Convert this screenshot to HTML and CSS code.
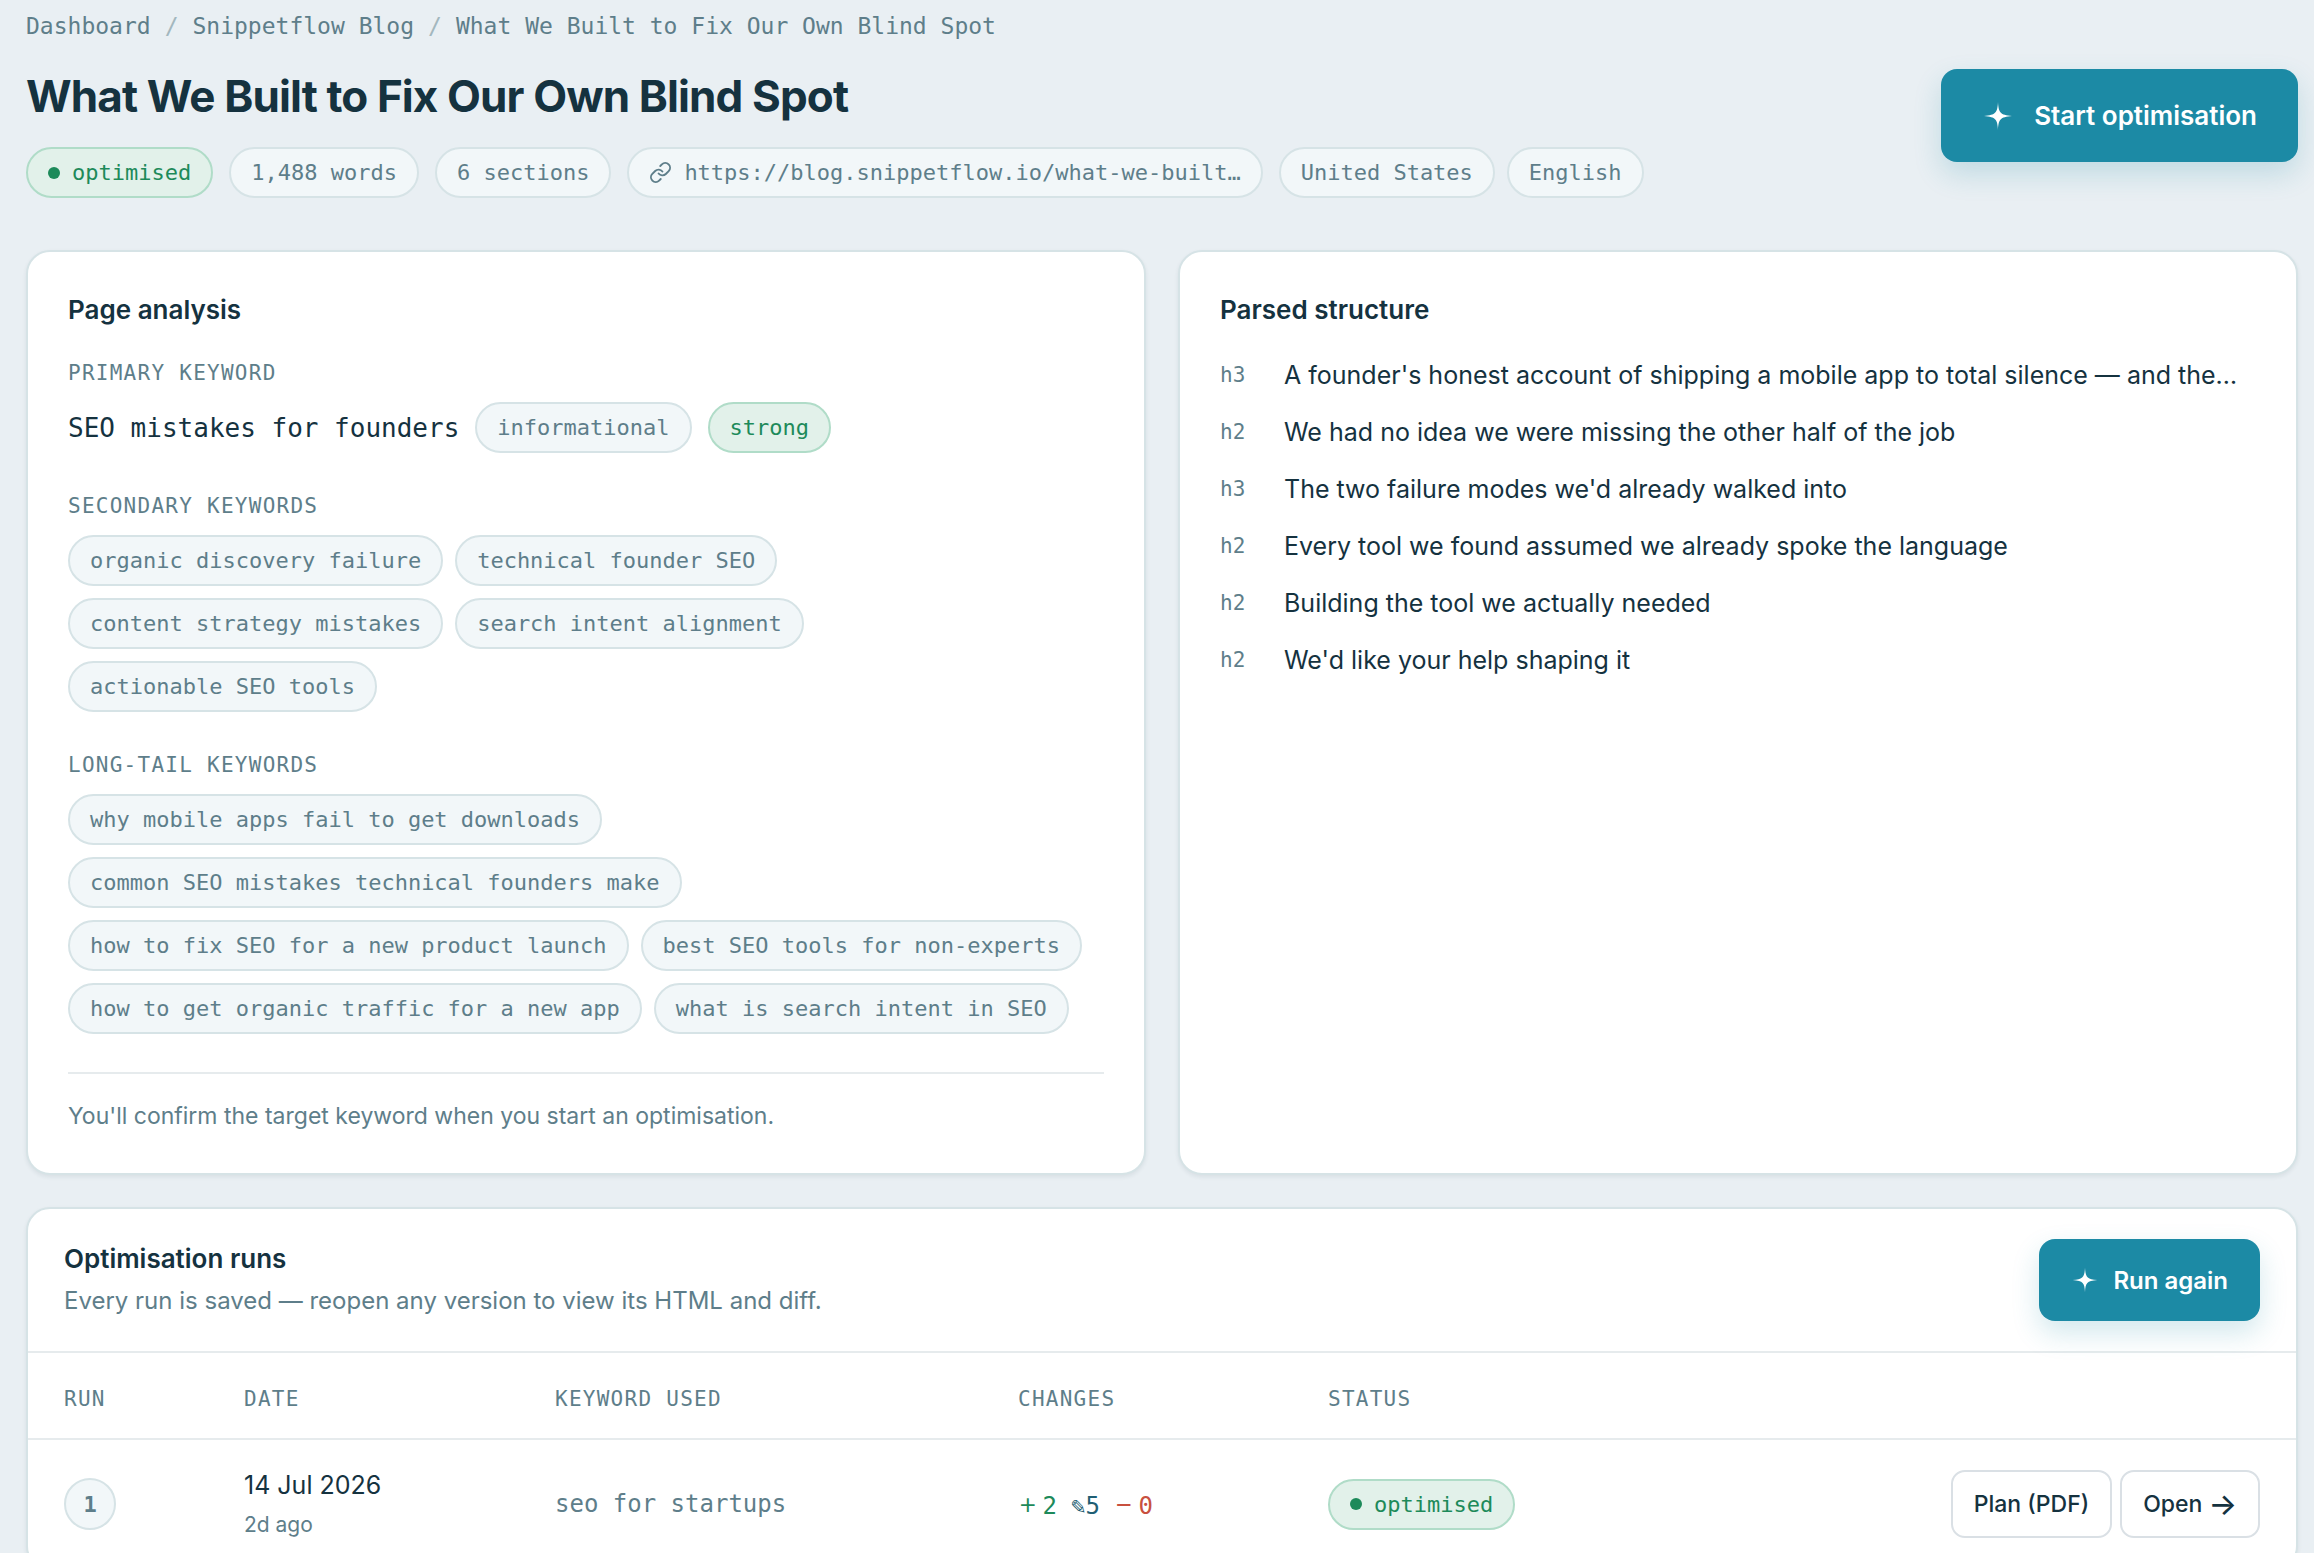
FILE: index.html
```html
<!DOCTYPE html>
<html lang="en">
<head>
  <meta charset="utf-8">
  <title>What We Built to Fix Our Own Blind Spot</title>
  <link rel="stylesheet" href="styles.css">
</head>
<body>
  <main class="page">
    <nav class="breadcrumb" aria-label="Breadcrumb">
      <a href="#">Dashboard</a>
      <span class="sep">/</span>
      <a href="#">Snippetflow Blog</a>
      <span class="sep">/</span>
      <span>What We Built to Fix Our Own Blind Spot</span>
    </nav>

    <header class="page-head">
      <div>
        <h1>What We Built to Fix Our Own Blind Spot</h1>
        <div class="meta">
          <span class="pill pill-green"><i class="dot"></i>optimised</span>
          <span class="pill">1,488 words</span>
          <span class="pill">6 sections</span>
          <a class="pill pill-link" href="#">
            <svg viewBox="0 0 24 24" fill="none" stroke="currentColor" stroke-width="2" stroke-linecap="round" stroke-linejoin="round">
              <path d="M10 13a5 5 0 0 0 7.54.54l3-3a5 5 0 0 0-7.07-7.07l-1.72 1.71"/>
              <path d="M14 11a5 5 0 0 0-7.54-.54l-3 3a5 5 0 0 0 7.07 7.07l1.71-1.71"/>
            </svg>
            https://blog.snippetflow.io/what-we-built…
          </a>
          <div class="locale">
            <span class="pill">United States</span>
            <span class="pill">English</span>
          </div>
        </div>
      </div>
      <button type="button" class="btn-primary btn-large">
        <svg viewBox="0 0 32 32" fill="currentColor">
          <path d="M16 2c.6 10.500 2 13 14 14-12 1-13.400 3.500-14 14-.6-10.500-2-13-14-14 12-1 13.400-3.500 14-14z"/>
        </svg>
        Start optimisation
      </button>
    </header>

    <div class="grid">
      <section class="card card-pad">
        <h2>Page analysis</h2>

        <div class="group">
          <h3 class="label">Primary keyword</h3>
          <div class="primary">
            <strong>SEO mistakes for founders</strong>
            <span class="pill">informational</span>
            <span class="pill pill-green">strong</span>
          </div>
        </div>

        <div class="group">
          <h3 class="label">Secondary keywords</h3>
          <div class="pills">
            <span class="pill">organic discovery failure</span>
            <span class="pill">technical founder SEO</span>
            <span class="pill">content strategy mistakes</span>
            <span class="pill">search intent alignment</span>
            <span class="pill">actionable SEO tools</span>
          </div>
        </div>

        <div class="group">
          <h3 class="label">Long-tail keywords</h3>
          <div class="pills">
            <span class="pill">why mobile apps fail to get downloads</span>
            <span class="pill">common SEO mistakes technical founders make</span>
            <span class="pill">how to fix SEO for a new product launch</span>
            <span class="pill">best SEO tools for non-experts</span>
            <span class="pill">how to get organic traffic for a new app</span>
            <span class="pill">what is search intent in SEO</span>
          </div>
        </div>

        <p class="note">You'll confirm the target keyword when you start an optimisation.</p>
      </section>

      <section class="card card-pad">
        <h2>Parsed structure</h2>
        <ul class="outline">
          <li><span class="tag">h3</span><span class="heading">A founder's honest account of shipping a mobile app to total silence — and the…</span></li>
          <li><span class="tag">h2</span><span class="heading">We had no idea we were missing the other half of the job</span></li>
          <li><span class="tag">h3</span><span class="heading">The two failure modes we'd already walked into</span></li>
          <li><span class="tag">h2</span><span class="heading">Every tool we found assumed we already spoke the language</span></li>
          <li><span class="tag">h2</span><span class="heading">Building the tool we actually needed</span></li>
          <li><span class="tag">h2</span><span class="heading">We'd like your help shaping it</span></li>
        </ul>
      </section>
    </div>

    <section class="card">
      <div class="runs-head">
        <div>
          <h2>Optimisation runs</h2>
          <p>Every run is saved — reopen any version to view its HTML and diff.</p>
        </div>
        <button type="button" class="btn-primary">
          <svg viewBox="0 0 32 32" fill="currentColor">
            <path d="M16 2c.6 10.500 2 13 14 14-12 1-13.400 3.500-14 14-.6-10.500-2-13-14-14 12-1 13.400-3.500 14-14z"/>
          </svg>
          Run again
        </button>
      </div>
      <table class="runs">
        <colgroup>
          <col class="col-run">
          <col class="col-date">
          <col class="col-keyword">
          <col class="col-changes">
          <col class="col-status">
          <col>
        </colgroup>
        <thead>
          <tr>
            <th class="label">Run</th>
            <th class="label">Date</th>
            <th class="label">Keyword used</th>
            <th class="label">Changes</th>
            <th class="label">Status</th>
            <th></th>
          </tr>
        </thead>
        <tbody>
          <tr>
            <td><span class="run-number">1</span></td>
            <td>
              <div class="date">14 Jul 2026</div>
              <div class="ago">2d ago</div>
            </td>
            <td class="keyword">seo for startups</td>
            <td>
              <div class="changes">
                <span class="added"><b>+</b>2</span>
                <span class="edited">✎5</span>
                <span class="removed"><b>−</b>0</span>
              </div>
            </td>
            <td><span class="pill pill-green"><i class="dot"></i>optimised</span></td>
            <td>
              <div class="actions">
                <button type="button" class="btn">Plan (PDF)</button>
                <a class="btn" href="#">Open <span class="arrow">→</span></a>
              </div>
            </td>
          </tr>
        </tbody>
      </table>
    </section>
  </main>
</body>
</html>
```
FILE: styles.css
```css
:root {
  --ink: #15323f;
  --muted: #5e7e8a;
  --line: #d6e3e6;
  --line-soft: #e6ebed;
  --teal: #1c8aa5;
  --green: #1d8a5a;
  --sans: Inter, "Liberation Sans", sans-serif;
  --mono: "DejaVu Sans Mono", "Liberation Mono", monospace;
}

* {
  box-sizing: border-box;
}

body {
  margin: 0;
  background: #e9eff3;
  color: var(--ink);
  font-family: var(--sans);
  font-size: 25px;
}

h1, h2, h3, p, ul {
  margin: 0;
  padding: 0;
}

a {
  color: inherit;
  text-decoration: none;
}

button {
  font-family: inherit;
  cursor: pointer;
}

/* the page scrolls inside the shell */
.page {
  height: 100vh;
  padding: 10px 16px 0 26px;
  overflow: hidden auto;
  scrollbar-width: none;
}

.breadcrumb {
  display: flex;
  gap: 14px;
  color: var(--muted);
  font-family: var(--mono);
  font-size: 23px;
  line-height: 32px;
}

.breadcrumb .sep {
  color: #a3b7be;
}

.page-head {
  display: flex;
  justify-content: space-between;
  align-items: flex-start;
  padding-top: 27px;
  margin-bottom: 52px;
}

h1 {
  font-size: 44px;
  font-weight: 650;
  line-height: 54px;
  letter-spacing: -0.02em;
}

h2 {
  font-size: 26px;
  font-weight: 600;
  line-height: 36px;
}

.meta {
  display: flex;
  flex-wrap: wrap;
  gap: 16px;
  margin-top: 24px;
}

.locale {
  display: flex;
  gap: 12px;
}

.pill {
  display: inline-flex;
  align-items: center;
  height: 51px;
  padding: 0 20px;
  border: 2px solid var(--line);
  border-radius: 26px;
  background: #f2f7f9;
  color: var(--muted);
  font-family: var(--mono);
  font-size: 22px;
  white-space: nowrap;
}

.pill-green {
  border-color: #b0dcc8;
  background: #e2f1ea;
  color: var(--green);
}

.dot {
  width: 12px;
  height: 12px;
  margin-right: 12px;
  border-radius: 50%;
  background: currentColor;
}

.pill-link {
  gap: 12px;
}

.pill-link svg {
  width: 23px;
  height: 23px;
}

.btn-primary {
  display: inline-flex;
  align-items: center;
  gap: 14px;
  height: 82px;
  padding: 0 32px;
  border: 0;
  border-radius: 16px;
  background: var(--teal);
  box-shadow: 0 12px 28px rgba(28, 138, 165, 0.2);
  color: #fff;
  font-size: 24px;
  font-weight: 600;
}

.btn-primary svg {
  width: 28px;
  height: 28px;
}

.btn-large {
  gap: 20px;
  height: 93px;
  padding: 0 41px;
  font-size: 26px;
}

.btn-large svg {
  width: 32px;
  height: 32px;
}

.grid {
  display: grid;
  grid-template-columns: 1fr 1fr;
  gap: 32px;
  margin-bottom: 32px;
}

.card {
  min-width: 0;
  border: 2px solid var(--line);
  border-radius: 24px;
  background: #fff;
  box-shadow: 0 2px 4px rgba(21, 50, 63, 0.08);
}

.card-pad {
  padding: 40px;
}

.card-pad h2 {
  margin-bottom: 30px;
}

.label {
  color: var(--muted);
  font-family: var(--mono);
  font-size: 21px;
  font-weight: 400;
  line-height: 30px;
  letter-spacing: 0.06em;
  text-transform: uppercase;
}

.group {
  margin-bottom: 38px;
}

.group .label {
  margin-bottom: 14px;
}

.primary {
  display: flex;
  align-items: center;
  gap: 16px;
}

.primary strong {
  font-family: var(--mono);
  font-size: 26px;
  font-weight: 400;
}

.pills {
  display: flex;
  flex-wrap: wrap;
  gap: 12px;
}

.note {
  padding-top: 25px;
  border-top: 2px solid var(--line-soft);
  color: var(--muted);
  font-size: 23px;
  line-height: 34px;
}

.outline {
  display: grid;
  gap: 23px;
  list-style: none;
}

.outline li {
  display: grid;
  grid-template-columns: 40px 1fr;
  gap: 24px;
  line-height: 34px;
}

.tag {
  color: var(--muted);
  font-family: var(--mono);
  font-size: 21px;
}

.heading {
  overflow: hidden;
  text-overflow: ellipsis;
  white-space: nowrap;
}

.runs-head {
  display: flex;
  justify-content: space-between;
  align-items: center;
  padding: 30px 36px;
  border-bottom: 2px solid var(--line-soft);
}

.runs-head p {
  margin-top: 6px;
  color: var(--muted);
  font-size: 24px;
  line-height: 36px;
}

.runs {
  width: 100%;
  border-collapse: collapse;
  table-layout: fixed;
}

.col-run { width: 216px; }
.col-date { width: 311px; }
.col-keyword { width: 463px; }
.col-changes { width: 310px; }
.col-status { width: 420px; }

.runs th {
  padding: 31px 0 24px;
  border-bottom: 2px solid var(--line-soft);
  text-align: left;
}

.runs td {
  padding: 26px 0;
}

.runs th:first-child,
.runs td:first-child {
  padding-left: 36px;
}

.runs td:last-child {
  padding-right: 36px;
}

.run-number {
  display: flex;
  align-items: center;
  justify-content: center;
  width: 52px;
  height: 52px;
  border: 2px solid var(--line);
  border-radius: 50%;
  background: #f2f7f9;
  color: var(--muted);
  font-family: var(--mono);
  font-size: 22px;
  font-weight: 700;
}

.date {
  line-height: 38px;
}

.ago {
  margin-top: 4px;
  color: var(--muted);
  font-size: 21px;
  line-height: 34px;
}

.keyword {
  color: var(--muted);
  font-family: var(--mono);
  font-size: 24px;
}

.changes {
  display: flex;
  align-items: baseline;
  gap: 14px;
  font-family: var(--mono);
  font-size: 24px;
  line-height: 28px;
}

.changes b {
  margin-right: 5px;
  font-family: var(--sans);
  font-size: 30px;
  font-weight: 300;
}

.added { color: var(--green); }
.edited { color: #1f5f74; }
.removed { color: #c8503f; }

.actions {
  display: flex;
  justify-content: flex-end;
  gap: 8px;
}

.btn {
  display: inline-flex;
  align-items: center;
  gap: 6px;
  height: 68px;
  padding: 0 21px;
  border: 2px solid #dae0e5;
  border-radius: 14px;
  background: #fff;
  color: var(--ink);
  font-size: 23px;
  font-weight: 500;
  white-space: nowrap;
}

.arrow {
  font-size: 30px;
  line-height: 30px;
}
```
